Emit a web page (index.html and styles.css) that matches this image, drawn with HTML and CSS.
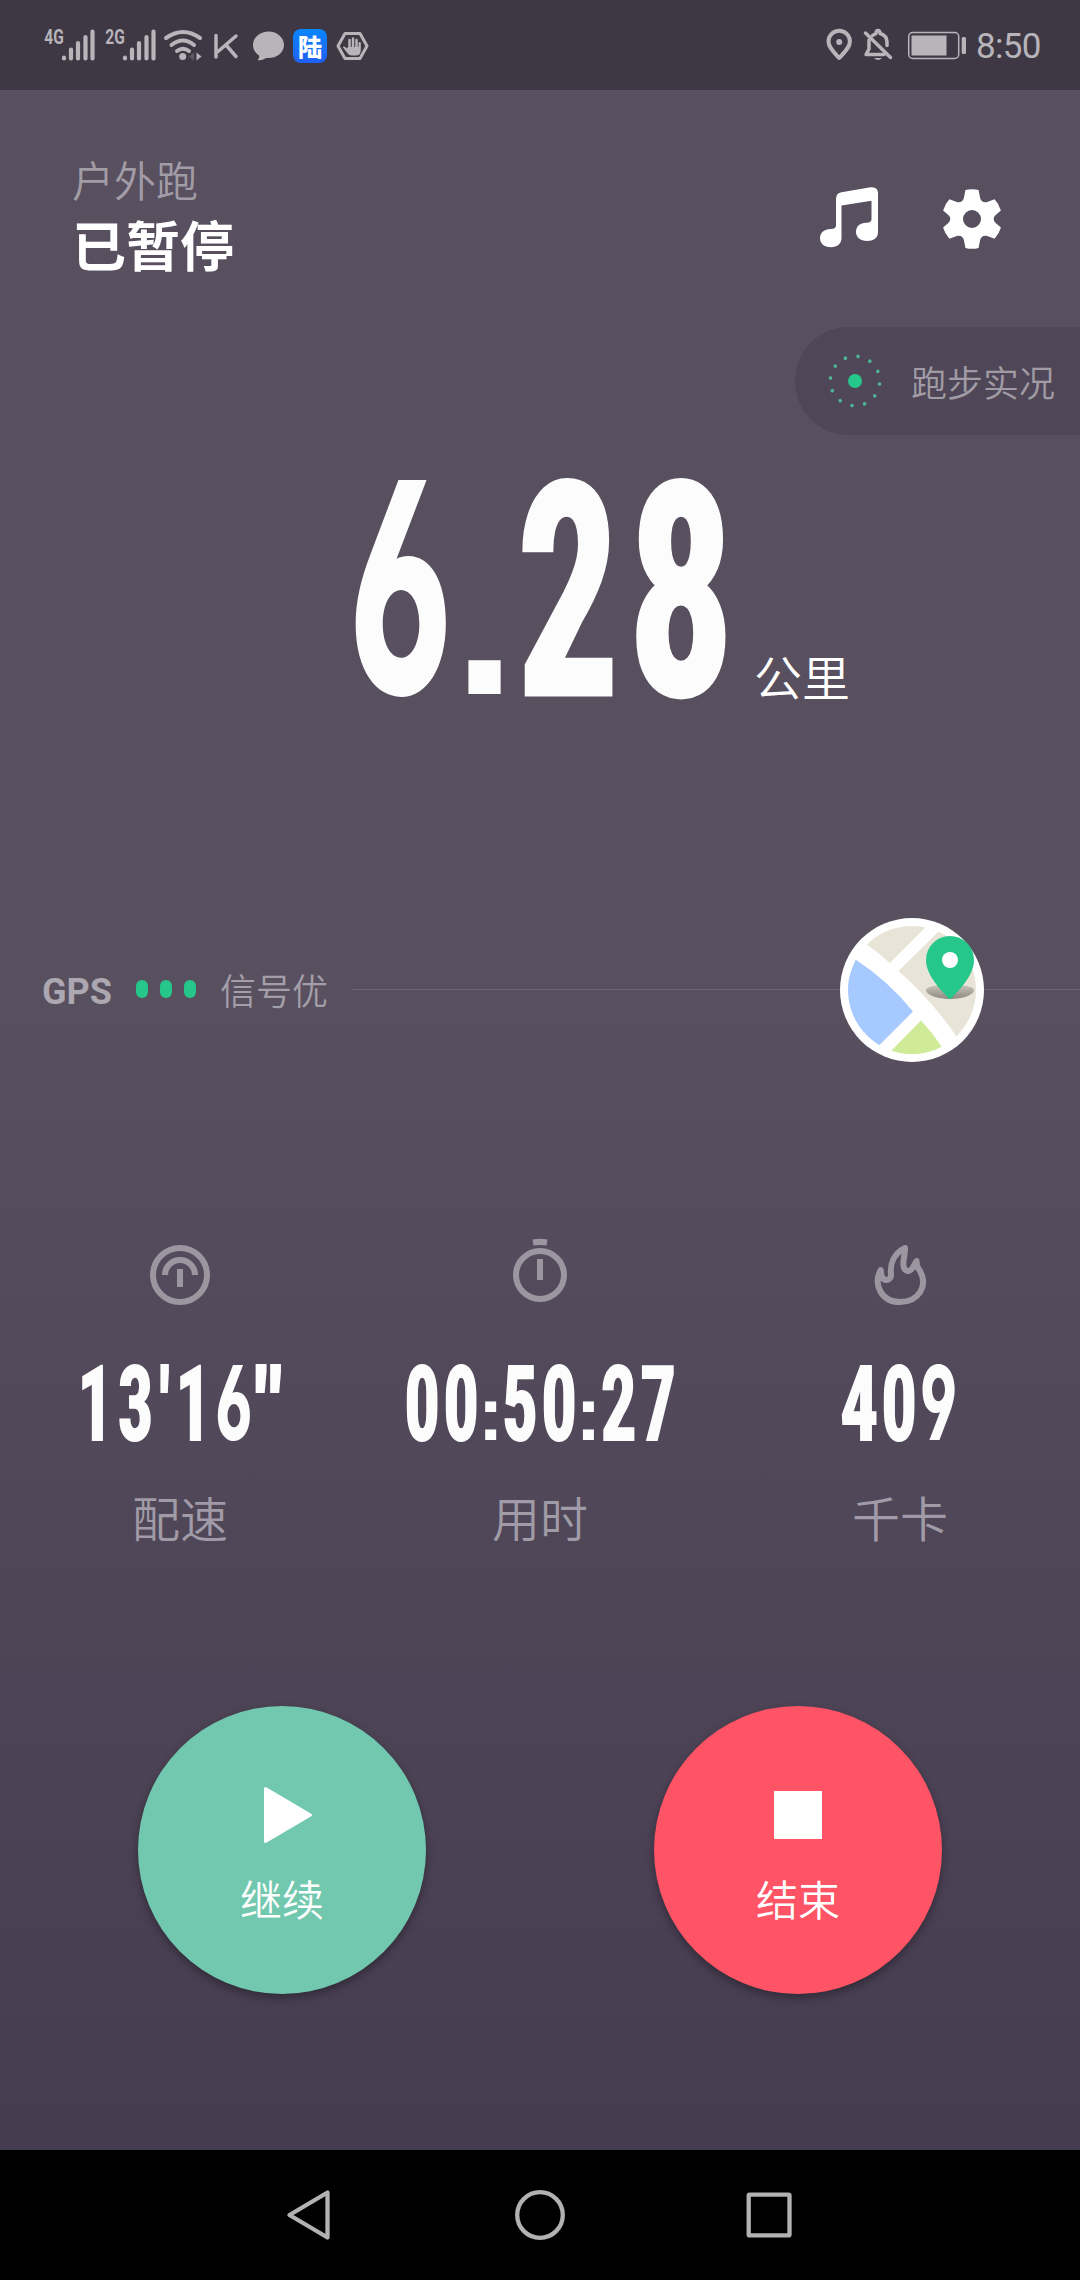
FILE: index.html
```html
<!DOCTYPE html>
<html lang="zh-CN">
<head>
<meta charset="utf-8">
<title>户外跑</title>
<link rel="stylesheet" href="styles.css">
</head>
<body>
<div class="screen">
  <header class="status">
    <div class="status-left">
      <svg class="ic" width="56" height="40" viewBox="42 25 56 40">
        <text class="net" transform="translate(44.3 43.8) scale(.74 1)">4G</text>
        <g class="bars"><path d="M64 57.5v1M71 49.5v9M78 43v15.500M85.500 37v21.500M92.500 31.500v27"/></g>
      </svg>
      <svg class="ic sim2" width="56" height="40" viewBox="42 25 56 40">
        <text class="net" transform="translate(44.3 43.8) scale(.74 1)">2G</text>
        <g class="bars"><path d="M64 57.5v1M71 49.5v9M78 43v15.500M85.500 37v21.500M92.500 31.500v27"/></g>
      </svg>
      <svg class="ic wifi" width="40" height="40" viewBox="163 25 40 40">
        <g class="line w4"><path d="M166 38q17-12 34 0M171.500 45q11.500-9 22.500 0M177 51q6-4.500 12 0"/></g>
        <circle class="fill" cx="182.700" cy="56.500" r="3.500"/>
        <path class="dim" d="M194 52.500v8l-5-4z"/><path class="fill" d="M196.500 52.500v8l5-4z"/>
      </svg>
      <svg class="ic kk" width="26" height="40" viewBox="213 25 26 40">
        <path class="line w35" d="M216 35.500v21.500M236 36l-18 15.500M226 45l10 11.500"/>
      </svg>
      <svg class="ic chat" width="34" height="40" viewBox="252 25 34 40">
        <path class="fill" d="M268.500 31.500c-8.600 0-15.500 6-15.500 13.500 0 4.600 2.500 8.200 6.300 10.800 0 2-.8 3.400-1.800 4.200 3.500 1 6.500-.7 8.500-2 9.500.9 18-4.500 18-13 0-7.500-6.900-13.500-15.500-13.500z"/>
      </svg>
      <div class="app">陆</div>
      <svg class="ic hex" width="34" height="40" viewBox="335 25 34 40">
        <path class="line w3" d="M345 33.500h15l7 12.500-7 12.500h-15l-7-12.500z"/>
        <path class="line w25" d="M349.500 40v9M353 38.500v10M356.500 40v9"/>
        <path class="fill" d="M348 47h10.500v-4.500q1.800-1.200 2.300.5v7q0 5.500-5 5.500h-4q-3 0-5-3l-4-5.500q1.500-1.700 4 1.500z"/>
      </svg>
    </div>
    <div class="status-right">
      <svg class="ic" width="28" height="40" viewBox="825 25 28 40">
        <path class="line w4" d="M839.200 58c-5-5.500-10.700-10.500-10.700-16.500a10.700 10.700 0 0 1 21.400 0c0 6-5.700 11-10.700 16.500z"/>
        <circle class="fill" cx="839.200" cy="42" r="3"/>
      </svg>
      <svg class="ic bell" width="30" height="40" viewBox="863 25 30 40">
        <path class="line w35" d="M869 40v9l-3 5.500h18M872.500 35.500l3.500-2q0-3 2-3t2 3c5 1.500 7 5 7 8.500v3.500"/>
        <path class="line w35" d="M865.500 33l25 24.500"/><path class="fill" d="M874 58h8q-4 4-8 0z"/>
      </svg>
      <svg class="ic batt" width="60" height="40" viewBox="907 25 60 40">
        <rect class="line w15" x="908.700" y="32.500" width="50" height="26" rx="4"/>
        <rect class="fill" x="911.500" y="35.500" width="35" height="20"/>
        <rect class="fill" x="961.700" y="37" width="4.300" height="17" rx="1.500"/>
      </svg>
      <span class="time">8:50</span>
    </div>
  </header>

  <main class="run">
    <div class="top">
      <div class="titles">
        <div class="mode">户外跑</div>
        <div class="state">已暂停</div>
      </div>
      <div class="actions">
        <svg width="60" height="64" viewBox="819 185 60 64">
          <path class="white" d="M836 199q0-6 5.500-6.800l29-4.900q7.500-.8 7.500 6v39.200c0 5-4.500 8.500-11 8.500s-11-3.800-11-9c0-5.500 4-9.200 10-9.200 3.500 0 5.500-1 5.500-4v-18l-30 4.700v32.500c0 5.500-4 9.300-10.700 9.300s-10.800-3.800-10.800-9.300c0-5.200 4.500-9 10.500-9 3.500 0 5.500-1 5.500-4z"/>
        </svg>
        <svg class="gear" width="60" height="62" viewBox="942 188 60 62">
          <path class="white" fill-rule="evenodd" d="M965.400 190q6.600-1.700 13.200 0l1.500 8c.8 3.500 4 5 7 4l7.500-2.700q4.500 4.800 6.300 11.200l-5.200 4.600c-2.600 2.300-2.600 5.500 0 7.800l5.200 4.600q-1.800 6.400-6.300 11.200l-7.500-2.700c-3-1-6.200.5-7 4l-1.500 8q-6.600 1.700-13.200 0l-1.500-8c-.8-3.500-4-5-7-4l-7.500 2.700q-4.500-4.800-6.300-11.200l5.200-4.600c2.600-2.300 2.600-5.500 0-7.800l-5.200-4.600q1.800-6.400 6.300-11.200l7.500 2.700c3 1 6.200-.5 7-4zM972 210a9 9 0 1 0 0 18a9 9 0 1 0 0-18z"/>
        </svg>
      </div>
    </div>

    <div class="live">
      <svg width="54" height="54" viewBox="-27 -27 54 54">
        <circle class="ring" r="24.700" pathLength="120" transform="rotate(7)"/>
        <circle class="green" r="7"/>
      </svg>
      <span>跑步实况</span>
    </div>

    <div class="distance">
      <svg width="390" height="230" viewBox="0 0 573.500 230" preserveAspectRatio="none">
        <text class="num big" y="219"><tspan class="slant" x="6" textLength="152" lengthAdjust="spacingAndGlyphs">6</tspan><tspan class="dot" x="159" textLength="93" lengthAdjust="spacingAndGlyphs">.</tspan><tspan x="253">2</tspan><tspan x="416" textLength="156" lengthAdjust="spacingAndGlyphs">8</tspan></text>
      </svg>
      <span class="unit">公里</span>
    </div>

    <div class="gps">
      <b>GPS</b>
      <div class="levels"><i></i><i></i><i></i></div>
      <span>信号优</span>
      <div class="rule"></div>
      <svg class="map" width="144" height="144" viewBox="840 918 144 144">
        <defs>
          <clipPath id="disc"><circle cx="912" cy="990" r="64"/></clipPath>
          <linearGradient id="shade" x1="0" y1="0" x2="0" y2="1"><stop offset="0" stop-color="#c8c4b9"/><stop offset="1" stop-color="#8f8a82"/></linearGradient>
        </defs>
        <circle cx="912" cy="990" r="72" fill="#fff"/>
        <g clip-path="url(#disc)">
          <path fill="#e8e5d8" d="M866.500 944.500q12 8 23.300 18.500L926 927l-30-10z"/>
          <path fill="#e8e5d8" d="M938.500 931.500L898.500 971q33 29 58 65.500L985 1020V930z"/>
          <path fill="#a6caff" d="M855.500 959.500q33 21.500 57.500 52L879 1045.500l-50-20z"/>
          <path fill="#cfeb97" d="M921 1020.500L890.500 1051.500v15h60l-9-20q-9-14-20.500-26z"/>
        </g>
        <path fill="url(#shade)" d="M926 990c0-7 48-7 48 0 0 5-12 9-24 9s-24-4-24-9z"/>
        <path fill="#26c78b" d="M950 999.500c-11-11-24-25-24-39.500a24 24 0 0 1 48 0c0 14.500-13 28.500-24 39.500z"/>
        <circle cx="950" cy="960" r="8" fill="#fff"/>
      </svg>
      <div class="rule end"></div>
    </div>

    <div class="stats">
      <div class="stat">
        <svg width="70" height="70" viewBox="145 1237 70 70">
          <g class="metric"><circle cx="180" cy="1275" r="27"/><path d="M165 1275a15 15 0 0 1 30 0M180 1269v18"/></g>
        </svg>
        <svg width="360" height="90" viewBox="0 0 529.400 90" preserveAspectRatio="none">
          <text class="num" y="82"><tspan x="114 173">13</tspan><tspan class="quote" x="234">'</tspan><tspan x="258">1</tspan><tspan class="slant" x="317" textLength="54" lengthAdjust="spacingAndGlyphs">6</tspan><tspan class="quote" x="373" textLength="43" lengthAdjust="spacingAndGlyphs">"</tspan></text>
        </svg>
        <div class="label">配速</div>
      </div>
      <div class="stat">
        <svg width="70" height="70" viewBox="505 1237 70 70">
          <g class="metric"><circle cx="540" cy="1275" r="24"/><path d="M540 1259v21"/></g>
          <path class="metric-fill" d="M532.500 1239.500q7.500-1.500 15 0l-1 6q-6.500-1-13 0z"/>
        </svg>
        <svg width="360" height="90" viewBox="0 0 529.400 90" preserveAspectRatio="none">
          <text class="num" y="82"><tspan x="65 122.500">00</tspan><tspan class="dot" x="173" textLength="38" lengthAdjust="spacingAndGlyphs">:</tspan><tspan x="209 266.600">50</tspan><tspan class="dot" x="317" textLength="38" lengthAdjust="spacingAndGlyphs">:</tspan><tspan x="354 412">27</tspan></text>
        </svg>
        <div class="label">用时</div>
      </div>
      <div class="stat">
        <svg width="70" height="70" viewBox="865 1237 70 70">
          <path class="metric round" d="M905 1248c-12 6-15 17-14 26 .5 7-7 8-9.500 2l-.8-6c-8 15 1 32 19.300 32s29-16 19.500-32q-3-3-3-9l-4 7c-4 5-8 3.500-9-2-1-6 2-12 1.500-18z"/>
        </svg>
        <svg width="360" height="90" viewBox="0 0 529.400 90" preserveAspectRatio="none">
          <text class="num" y="82"><tspan x="177" textLength="56" lengthAdjust="spacingAndGlyphs">4</tspan><tspan x="237">0</tspan><tspan class="slant" x="294.500" textLength="54" lengthAdjust="spacingAndGlyphs">9</tspan></text>
        </svg>
        <div class="label">千卡</div>
      </div>
    </div>

    <div class="buttons">
      <div class="btn go">
        <svg width="60" height="60" viewBox="252 1785 60 60"><path class="white joined" d="M265.500 1788.500v53l45-26.500z"/></svg>
        <span>继续</span>
      </div>
      <div class="btn stop">
        <svg width="48" height="60" viewBox="774 1785 48 60"><path class="white" d="M774 1791h48v48h-48z"/></svg>
        <span>结束</span>
      </div>
    </div>
  </main>

  <nav class="nav">
    <svg width="46" height="54" viewBox="286 2188 46 54"><path d="M327.500 2192.500v45L289.500 2215z"/></svg>
    <svg width="54" height="54" viewBox="513 2188 54 54"><circle cx="540" cy="2215" r="22.800"/></svg>
    <svg width="50" height="54" viewBox="744 2188 50 54"><rect x="748.700" y="2194.600" width="40.800" height="40.800" rx="1"/></svg>
  </nav>
</div>
</body>
</html>
```
FILE: styles.css
```css
* { box-sizing: border-box; }
body { margin: 0; background: #000; font-family: Roboto, "Noto Sans CJK SC", sans-serif; }
svg { display: block; flex: none; overflow: visible; }
.screen { width: 1080px; height: 2280px; display: flex; flex-direction: column; overflow: hidden; }

.status { height: 90px; flex: none; background: #3e3844; display: flex; justify-content: space-between; }
.status-left, .status-right { display: flex; align-items: flex-start; padding-top: 25px; }
.status-left { padding-left: 42px; }
.status-right { width: 255px; }
.sim2 { margin-left: 5px; }
.wifi { margin-left: 4px; }
.kk { margin-left: 10px; }
.chat { margin-left: 13px; }
.app { width: 34px; height: 34px; margin: 4px 0 0 7px; border-radius: 8px; background: linear-gradient(#0a86ff, #2060f4); color: #fff; font: 900 24px/33px "Noto Sans CJK SC", sans-serif; text-align: center; }
.hex { margin-left: 8px; }
.bell { margin-left: 10px; }
.batt { margin-left: 14px; }
.time { margin-left: 9px; font-size: 35px; line-height: 43px; letter-spacing: -.7px; color: #b7b4ba; }
.net { font: 700 21px Roboto, sans-serif; fill: #b7b4ba; }
.bars path, .line { fill: none; stroke: #b7b4ba; stroke-linecap: round; stroke-linejoin: round; }
.bars path { stroke-width: 4.2; }
.line path { stroke: #b7b4ba; }
.w4 { stroke-width: 4; }
.w35 { stroke-width: 3.5; }
.w3 { stroke-width: 3; }
.w25 { stroke-width: 2.5; }
.w15 { stroke-width: 1.5; }
.fill { fill: #b7b4ba; }
.dim { fill: #5e5965; }
.white { fill: #fff; }
.joined { stroke: #fff; stroke-width: 3; stroke-linejoin: round; }

.run { height: 2060px; flex: none; display: flex; flex-direction: column; background: linear-gradient(#584f5f 0, #584f5f 920px, #453c50 2060px); font-weight: 350; }
.top { height: 237px; flex: none; display: flex; justify-content: space-between; padding: 59px 78px 0 72px; }
.titles { padding-top: 3px; }
.mode { font-size: 42px; line-height: 62px; color: #a19ca6; }
.state { font-size: 54px; line-height: 70px; font-weight: 700; color: #fff; }
.actions { display: flex; gap: 63px; padding-top: 36px; }
.gear { margin-top: 3px; }

.live { align-self: flex-end; width: 285px; height: 108px; flex: none; display: flex; align-items: center; padding-left: 33px; border-radius: 54px 0 0 54px; background: #4f4757; color: #a09ba5; font-size: 36px; }
.live span { margin-left: 29px; line-height: 50px; padding-top: 8px; white-space: nowrap; }
.ring { fill: none; stroke: #4db795; stroke-width: 3.600; stroke-linecap: round; stroke-dasharray: .01 9.990; }
.green { fill: #26c78b; }

.distance { height: 428px; flex: none; display: flex; align-items: flex-start; padding: 40px 0 0 345px; }
.num { font: 700 104px Roboto, "Roboto Condensed", sans-serif; font-stretch: 75%; fill: #fcfcfc; stroke: #fcfcfc; stroke-width: 2; }
.slant { font-family: Inter, sans-serif; font-size: 103px; font-weight: 800; stroke: none; font-feature-settings: "ss01", "cv09", "cv10"; }
.dot { font-family: "Liberation Sans", sans-serif; font-size: 76px; stroke: none; }
.quote { font-size: 100px; }
.num.big { font-size: 296px; stroke-width: 5; }
.big .slant { font-size: 294px; }
.big .dot { font-size: 227px; }
.unit { margin: 170px 0 0 19px; font-size: 48px; line-height: 70px; color: #fff; }

.gps { height: 254px; flex: none; display: flex; align-items: center; color: #a39ea8; font-size: 36px; padding-left: 42px; }
.gps b { font-weight: 700; width: 94px; padding-top: 4px; color: #aca7b0; }
.levels { display: flex; gap: 12px; margin-top: -2px; }
.levels i { width: 12px; height: 18px; border-radius: 6px; background: #26c78b; }
.gps span { margin-left: 24px; line-height: 50px; padding-top: 5px; width: 132px; }
.rule { height: 1px; width: 488px; margin-top: -1px; background: #6c6472; }
.rule.end { width: 96px; }

.stats { height: 466px; flex: none; display: flex; padding-top: 120px; }
.stat { width: 360px; display: flex; flex-direction: column; align-items: center; }
.stat svg + svg { margin-top: 51px; }
.metric, .metric-fill { opacity: .42; }
.metric { fill: none; stroke: #fff; stroke-width: 6; }
.metric-fill { fill: #fff; }
.round { stroke-linejoin: round; }
.label { margin-top: 36px; font-size: 48px; line-height: 74px; color: #a09ba7; }

.buttons { display: flex; gap: 228px; padding: 123px 0 0 138px; }
.btn { width: 288px; height: 288px; border-radius: 50%; display: flex; flex-direction: column; align-items: center; padding-top: 79px; color: #fff; font-size: 42px; box-shadow: 0 4px 8px rgba(0, 0, 0, .32); }
.btn span { margin-top: 27px; line-height: 60px; }
.go { background: #72c8ae; }
.stop { background: #ff5465; }

.nav { height: 130px; flex: none; background: #000; display: flex; align-items: center; padding-left: 286px; gap: 181px; }
.nav svg + svg + svg { margin-left: -4px; }
.nav path, .nav circle, .nav rect { fill: none; stroke: #b2b2b2; stroke-width: 4.300; stroke-linejoin: round; }
```
